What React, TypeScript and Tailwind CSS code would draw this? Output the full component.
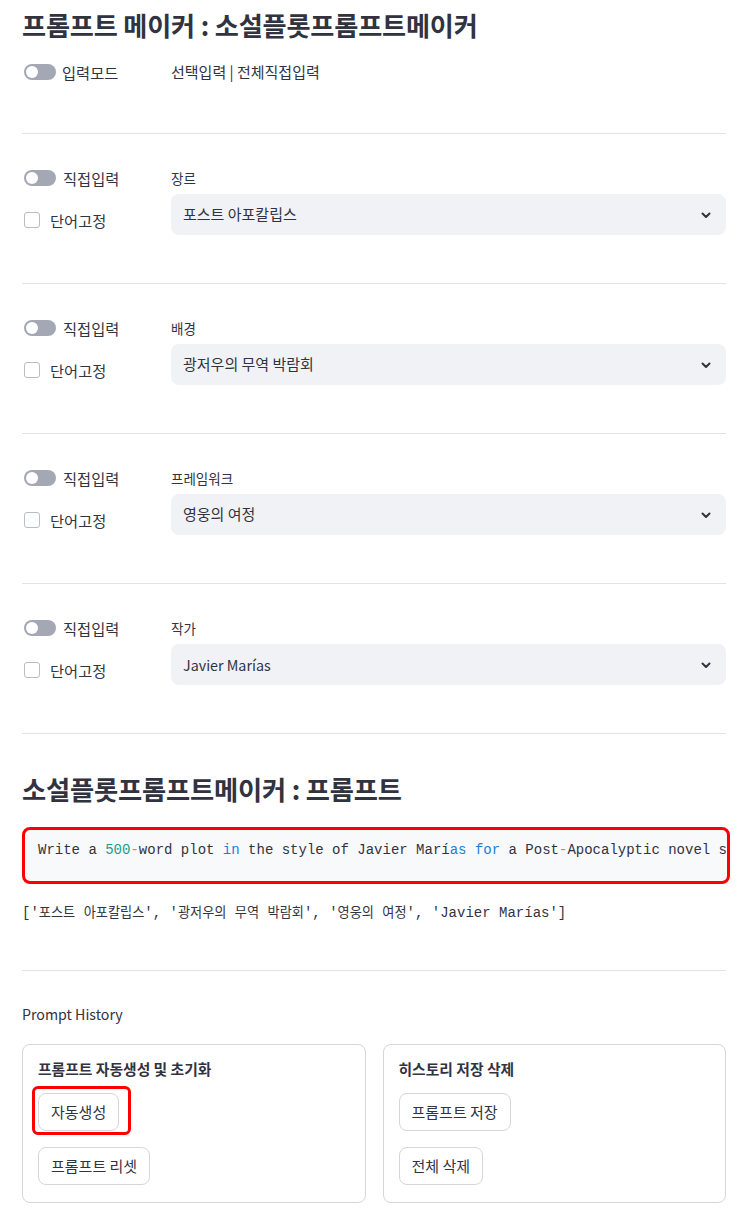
import React from "react";

const KO = '"Noto Sans CJK KR", "Noto Sans", sans-serif';
const MONO = '"Liberation Mono", "DejaVu Sans Mono", "Noto Sans CJK KR", monospace';

function Toggle() {
  return (
    <div className="w-[32px] h-[16px] rounded-full bg-[#a3a8b4] flex items-center shrink-0">
      <div className="w-[12px] h-[12px] rounded-full bg-white ml-[2px]" />
    </div>
  );
}

function Checkbox() {
  return <div className="w-[16px] h-[16px] rounded-[3px] border border-[#b9bcc4] bg-white shrink-0" />;
}

function Chevron() {
  return (
    <svg width="12" height="12" viewBox="0 0 12 12" fill="none">
      <path d="M2.5 4.5 L6 8 L9.5 4.5" stroke="#31333f" strokeWidth="2" strokeLinecap="round" strokeLinejoin="round" />
    </svg>
  );
}

function Divider() {
  return <div className="h-px bg-[#e2e3e7] w-full" />;
}

function Section({ label, value, latin }: { label: string; value: string; latin?: boolean }) {
  return (
    <div className="flex pt-[34px] pb-[48px]">
      <div className="w-[149px] shrink-0 flex flex-col">
        <div className="h-[20px] flex items-center pl-[2px]">
          <Toggle />
          <span className="ml-[7px] text-[15.3px] text-[#31333f]">직접입력</span>
        </div>
        <div className="h-[20px] mt-[22px] flex items-center pl-[2px]">
          <Checkbox />
          <span className="ml-[10px] text-[15.3px] text-[#31333f]">단어고정</span>
        </div>
      </div>
      <div className="flex-1 flex flex-col">
        <div className="h-[20px] flex items-center text-[13.5px] text-[#31333f]">{label}</div>
        <div className="mt-[6px] h-[41px] rounded-lg bg-[#f0f2f6] flex items-center justify-between pl-[12px] pr-[14px]">
          <span className={latin ? "text-[14.3px] text-[#31333f]" : "text-[15px] text-[#31333f]"}>{value}</span>
          <Chevron />
        </div>
      </div>
    </div>
  );
}

function Btn({ children }: { children: React.ReactNode }) {
  return (
    <div className="inline-flex h-[38px] items-center px-[12px] rounded-lg border border-[#d6d6d9] bg-white text-[15px] text-[#31333f]">
      {children}
    </div>
  );
}

const K = ({ children }: { children: React.ReactNode }) => (
  <span style={{ fontFamily: KO }} className="text-[13.2px]">{children}</span>
);

export default function App() {
  return (
    <div className="w-[743px] min-h-[1216px] bg-white text-[#31333f] overflow-hidden" style={{ fontFamily: KO }}>
      <div className="px-[22px] pr-[17px] w-[743px]">
        <div className="w-[704px]">
          <h1 className="pt-[8px] h-[42px] leading-[34px] text-[26.2px] font-bold tracking-[-0.2px] text-[#31333f]">
            프롬프트 메이커 : 소설플롯프롬프트메이커
          </h1>
          <div className="mt-[20px] h-[20px] flex items-center">
            <div className="w-[149px] flex items-center pl-[2px]">
              <Toggle />
              <span className="ml-[6px] text-[15.3px]">입력모드</span>
            </div>
            <span className="text-[15px]">선택입력 | 전체직접입력</span>
          </div>
          <div className="mt-[51px]">
            <Divider />
          </div>
          <Section label="장르" value="포스트 아포칼립스" />
          <Divider />
          <Section label="배경" value="광저우의 무역 박람회" />
          <Divider />
          <Section label="프레임워크" value="영웅의 여정" />
          <Divider />
          <Section label="작가" value="Javier Marías" latin />
          <Divider />

          <h2 className="mt-[38px] h-[34px] leading-[34px] text-[26.3px] font-bold tracking-[-0.2px]">
            소설플롯프롬프트메이커 : 프롬프트
          </h2>
          <div className="mt-[21px] w-[708px] h-[57px] rounded-lg border-[3px] border-[#ff0000] bg-[#f8f9fb] overflow-hidden flex items-center pl-[13px] pb-[12px]">
            <pre className="text-[14px] leading-[20px] text-[#31333f] whitespace-pre m-0" style={{ fontFamily: MONO }}>
              Write a <span className="text-[#1a9e88]">500</span>
              <span className="text-[#f07b2a]">-</span>word plot <span className="text-[#1c7ed6]">in</span> the style of Javier Marí
              <span className="text-[#1c7ed6]">as</span> <span className="text-[#1c7ed6]">for</span> a Post
              <span className="text-[#f07b2a]">-</span>Apocalyptic novel set
            </pre>
          </div>
          <div className="mt-[18px] h-[20px] leading-[20px] text-[14px] whitespace-pre" style={{ fontFamily: MONO }}>
            ['<K>포스트</K> <K>아포칼립스</K>', '<K>광저우의</K> <K>무역</K> <K>박람회</K>', '<K>영웅의</K> <K>여정</K>', 'Javier Marías']
          </div>
          <div className="mt-[48px]">
            <Divider />
          </div>
          <div className="mt-[33px] h-[20px] leading-[20px] text-[14.2px]">Prompt History</div>
          <div className="mt-[20px] grid grid-cols-2 gap-[17px]">
            <div className="h-[159px] rounded-lg border border-[#d6d6d9] px-[15px] pt-[14px]">
              <div className="h-[20px] leading-[20px] text-[14.8px] font-bold">프롬프트 자동생성 및 초기화</div>
              <div className="mt-[14px] relative inline-block">
                <div className="absolute left-[-6px] right-[-12px] top-[-7px] bottom-[-4px] border-[3px] border-[#ff0000] rounded-md" />
                <Btn>자동생성</Btn>
              </div>
              <div className="mt-[16px]">
                <Btn>프롬프트 리셋</Btn>
              </div>
            </div>
            <div className="h-[159px] rounded-lg border border-[#d6d6d9] px-[15px] pt-[14px]">
              <div className="h-[20px] leading-[20px] text-[14.8px] font-bold">히스토리 저장 삭제</div>
              <div className="mt-[14px]">
                <Btn>프롬프트 저장</Btn>
              </div>
              <div className="mt-[16px]">
                <Btn>전체 삭제</Btn>
              </div>
            </div>
          </div>
        </div>
      </div>
    </div>
  );
}
